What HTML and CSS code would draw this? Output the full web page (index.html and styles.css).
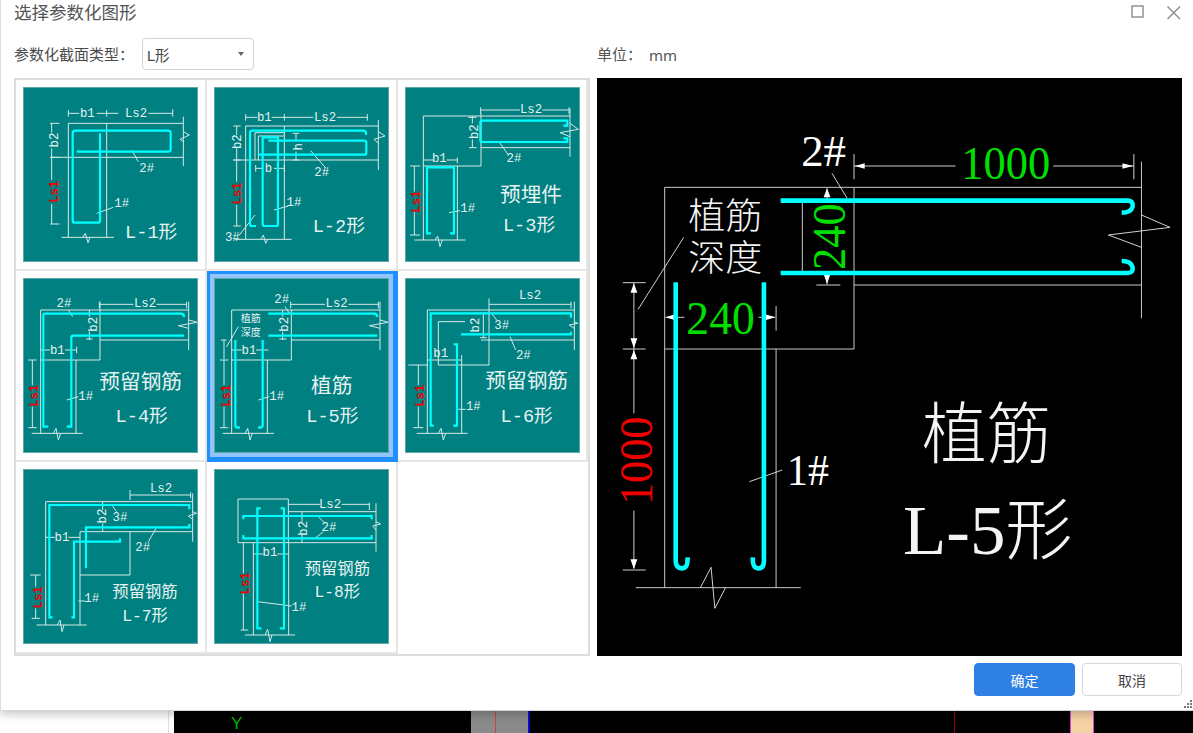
FILE: index.html
```html
<!DOCTYPE html>
<html lang="zh">
<head>
<meta charset="utf-8">
<title>选择参数化图形</title>
<link rel="stylesheet" href="styles.css">
</head>
<body>
<div class="dialog">
  <header class="titlebar">
    <h1 class="title">选择参数化图形</h1>
    <div class="winbtns">
      <svg class="winicon" width="14" height="14" viewBox="0 0 14 14"><rect class="wi" x="1" y="1" width="11" height="11"/></svg>
      <svg class="winicon" width="15" height="15" viewBox="0 0 15 15"><path class="wi" d="M1.5 1.5L14 14M14 1.5L1.5 14"/></svg>
    </div>
  </header>
  <div class="toolbar">
    <div class="tool-left">
      <span class="label">参数化截面类型：</span>
      <div class="select"><span>L形</span><i class="caret"></i></div>
    </div>
    <div class="tool-right"><span>单位：</span><span class="unit">mm</span></div>
  </div>
  <main class="content">
    <div class="gallery">
      <div class="cell"><svg class="thumb" viewBox="69 261 525 525">
        <path class="ln" d="M205 330V350M205 340H238M290 340H355M320 330V350M445 340H518M518 328V350M205 370V712M320 370V712M205 370H550M150 472H550M550 350V498M185 712H342M248 712L256 700L264 728L270 712M550 395L568 405L540 418L550 425M150 370H178M155 370V398M155 445V472M150 472H178M155 472V540M155 612V672M150 672H178M395 450L415 485M290 640L340 622"/>
        <path class="cy" d="M225 392H505Q512 392 512 399V448Q512 455 505 455H230M300 400V662Q300 668 294 668H224Q218 668 218 662V400Q218 392 226 392"/>
        <text class="t c" x="262" y="351">b1</text><text class="t c" x="408" y="351">Ls2</text>
        <text class="t c" x="440" y="517">2#</text><text class="t c" x="365" y="622">1#</text>
        <text class="t c" transform="rotate(-90 175 420)" x="175" y="420">b2</text>
        <text class="t c red" transform="rotate(-90 175 575)" x="175" y="575">Ls1</text>
        <text class="t big" x="375" y="715">L-1形</text>
      </svg></div>
      <div class="cell"><svg class="thumb" viewBox="642 261 525 525">
        <path class="ln" d="M737 342V362M737 352H772M815 352H940M1010 352H1102M853 342V362M1102 342V362M737 378V718M853 378V718M737 378H1135M700 480H1135M1135 360V510M705 718H875M765 398H853M765 398V480M775 408H853M775 408V480M888 400V425M888 455V480M878 400H898M878 480H898M767 495V515M767 505H790M822 505H853M853 495V515M710 378V405M710 445V480M700 378H722M700 480H722M710 480V545M710 615V678M700 678H722M932 452L978 505M822 630L865 618M718 705L765 645M1135 395L1155 408L1122 418L1135 430M782 718L790 705L797 730L803 718"/>
        <path class="cy" d="M1098 405V400Q1098 392 1090 392H756Q750 392 750 398V672Q750 678 756 678H768M805 422H1093Q1099 422 1099 428V458Q1099 464 1093 464H775M794 412H788V672Q788 678 794 678H828Q834 678 834 672V412H790"/>
        <text class="t c" x="793" y="363">b1</text><text class="t c" x="975" y="363">Ls2</text>
        <text class="t c" x="965" y="528">2#</text><text class="t c" x="882" y="617">1#</text><text class="t c" x="697" y="723">3#</text><text class="t c" x="805" y="516">b</text>
        <text class="t c" transform="rotate(-90 905 440)" x="905" y="440">h</text>
        <text class="t c" transform="rotate(-90 723 425)" x="723" y="425">b2</text>
        <text class="t c red" transform="rotate(-90 723 580)" x="723" y="580">Ls1</text>
        <text class="t big" x="938" y="695">L-2形</text>
      </svg></div>
      <div class="cell"><svg class="thumb" viewBox="30 21 525 525">
        <path class="ln" d="M257 82V102M257 90H375M442 90H522M522 82V102M85 108V480M85 108H525M525 85V230M258 100V258H85M258 203H525M187 258V480M58 480H212M232 108V130M232 178V203M222 203H245M220 112H245M85 240H115M155 240H187M187 232V250M45 258H75M58 258V335M58 395V465M45 465H75M525 130L550 148L495 158L525 170M120 480L128 468L135 500L142 480M312 185L340 225M162 398L195 392"/>
        <path class="cy" d="M505 137H517V122H262Q256 122 256 128V180Q256 186 262 186H517V175H505M108 460H96V262H177V460H165"/>
        <text class="t c" x="133" y="245">b1</text><text class="t c" x="408" y="99">Ls2</text>
        <text class="t c" x="357" y="247">2#</text><text class="t c" x="218" y="397">1#</text>
        <text class="t c" transform="rotate(-90 250 155)" x="250" y="155">b2</text>
        <text class="t c red" transform="rotate(-90 74 365)" x="74" y="365">Ls1</text>
        <text class="t cjk c" x="408" y="367">预埋件</text>
        <text class="t big c" x="402" y="452">L-3形</text>
      </svg></div>
      <div class="cell"><svg class="thumb" viewBox="69 39 525 525">
        <path class="ln" d="M298 110V130M298 118H400M470 118H560M560 110V130M122 135V505M122 135H566M566 110V255M300 110V285H122M300 225H566M228 285V505M95 505H248M268 135V155M268 200V225M258 222H278M122 255H150M195 255H230M230 245V265M85 285H110M97 285V360M97 425V488M85 488H110M566 165L592 172L535 182L566 190M160 505L168 490L175 525L182 505M205 135L218 155M200 405L235 395"/>
        <path class="cy" d="M552 156Q552 146 542 146H135Q130 146 130 152V485H145M552 212H220Q214 212 214 218V485H200"/>
        <text class="t c" x="172" y="267">b1</text><text class="t c" x="435" y="127">Ls2</text>
        <text class="t c" x="192" y="125">2#</text><text class="t c" x="257" y="406">1#</text>
        <text class="t c" transform="rotate(-90 292 178)" x="292" y="178">b2</text>
        <text class="t c red" transform="rotate(-90 114 392)" x="114" y="392">Ls1</text>
        <text class="t cjk c" x="422" y="372">预留钢筋</text>
        <text class="t big c" x="425" y="472">L-4形</text>
      </svg></div>
      <div class="cell active"><svg class="thumb" viewBox="642 39 525 525">
        <path class="ln" d="M872 110V130M872 118H975M1045 118H1135M1135 110V130M695 135V505M695 135H1140M1140 110V255M874 135V285H695M874 225H1140M802 285V505M668 505H822M855 125L868 145M715 185L680 245M848 135V155M848 200V225M838 222H860M695 255H725M768 255H805M663 225H680M672 225V282M660 285H685M672 285V360M672 425V488M660 488H685M1140 165L1165 172L1108 182L1140 190M735 505L743 490L750 525L757 505M775 405L808 395"/>
        <path class="cy" d="M805 146H1122Q1132 146 1132 156M805 212H1132M706 225V480Q706 488 714 488H720M788 225V480Q788 488 780 488H774"/>
        <text class="t c" x="747" y="267">b1</text><text class="t c" x="1010" y="127">Ls2</text>
        <text class="t c" x="845" y="115">2#</text><text class="t c" x="830" y="406">1#</text>
        <text class="t c small" x="752" y="172">植筋</text><text class="t c small" x="752" y="213">深度</text>
        <text class="t c" transform="rotate(-90 864 178)" x="864" y="178">b2</text>
        <text class="t c red" transform="rotate(-90 690 392)" x="690" y="392">Ls1</text>
        <text class="t cjk c" x="995" y="385">植筋</text>
        <text class="t big c" x="997" y="472">L-5形</text>
      </svg></div>
      <div class="cell"><svg class="thumb" viewBox="30 39 525 525">
        <path class="ln" d="M282 100V135M282 118H528M528 110V130M97 135V505M97 135H538M538 110V255M282 135V300H130M130 170V300M130 170H210M258 225H538M200 270V505M65 505H218M97 285H200M265 145V218M255 145H275M255 218H275M40 300H100M70 300V360M70 425V488M55 488H85M538 170L548 175L522 180L538 190M130 505L138 490L145 525L152 505M290 145L305 165M345 215L362 255M190 433H212"/>
        <path class="cy" d="M528 158V145H107V482H116M198 208H528V200M176 238H186V482H175"/>
        <text class="t c" x="137" y="275">b1</text><text class="t c" x="405" y="102">Ls2</text>
        <text class="t c" x="320" y="192">3#</text><text class="t c" x="385" y="281">2#</text><text class="t c" x="235" y="435">1#</text>
        <text class="t c" transform="rotate(-90 252 180)" x="252" y="180">b2</text>
        <text class="t c red" transform="rotate(-90 87 392)" x="87" y="392">Ls1</text>
        <text class="t cjk c" x="395" y="368">预留钢筋</text>
        <text class="t big c" x="395" y="470">L-6形</text>
      </svg></div>
      <div class="cell"><svg class="thumb" viewBox="69 27 525 525">
        <path class="ln" d="M390 90V120M390 105H572M572 97V115M137 125V495M137 125H578M578 100V245M240 215V495M240 215H578M240 345H390M390 215V345M110 495H260M308 125V150M308 190V215M137 232H165M205 232H240M90 345H122M107 345V380M107 445V475M95 475H120M578 155L590 160L565 168L578 178M172 495L180 480L186 515L192 495M335 135L350 155M445 245L468 205M235 423H255"/>
        <path class="cy" d="M568 148V135H148V472H158M568 192V202H258V325M360 235V245H222V472H214"/>
        <text class="t c" x="186" y="243">b1</text><text class="t c" x="483" y="95">Ls2</text>
        <text class="t c" x="360" y="183">3#</text><text class="t c" x="428" y="272">2#</text><text class="t c" x="275" y="425">1#</text>
        <text class="t c" transform="rotate(-90 318 168)" x="318" y="168">b2</text>
        <text class="t c red" transform="rotate(-90 126 412)" x="126" y="412">Ls1</text>
        <text class="t mid c" x="435" y="412">预留钢筋</text>
        <text class="t mid c" x="435" y="482">L-7形</text>
      </svg></div>
      <div class="cell"><svg class="thumb" viewBox="642 27 525 525">
        <path class="ln" d="M714 117H865V248H714ZM866 133H960M1025 133H1108M1108 128V150M866 155H1128M866 248H1128M1128 130V275M760 248V525M866 248V525M735 525H885M722 510H745M730 248V340M730 400V510M906 155V185M906 225V248M762 282H790M832 282H866M1128 185L1142 192L1118 198L1128 210M795 525L803 508L810 545L816 525M955 170L975 190M945 235L970 215M772 425L875 438"/>
        <path class="cy" d="M782 145H772V505H784M842 145H852V505H840M730 178V168H1115V178M730 225V235H1115V225"/>
        <text class="t c" x="810" y="287">b1</text><text class="t c" x="990" y="145">Ls2</text>
        <text class="t c" x="987" y="212">2#</text><text class="t c" x="897" y="454">1#</text>
        <text class="t c" transform="rotate(-90 920 205)" x="920" y="205">b2</text>
        <text class="t c red" transform="rotate(-90 747 370)" x="747" y="370">Ls1</text>
        <text class="t mid c" x="1012" y="342">预留钢筋</text>
        <text class="t mid c" x="1012" y="412">L-8形</text>
      </svg></div>
    </div>
    <div class="preview">
      <svg class="drawing" viewBox="0 -126 1538.6 1734" preserveAspectRatio="none">
        <path class="pl" d="M178 202H1432M178 202V1403M676 202V687M178 687H676M676 495H1432M1432 125V595M471 687V1403M102 1403H536"/>
        <path class="pw" d="M676 102V178M1412 102V178M676 138H943M1200 138H1412M1432 285L1507 322L1345 345L1432 382M618 160L658 235M540 242V459H676M605 205V238M605 460V493M577 495H640M228 352L108 568M68 488H128M68 687H128M97 488V880M97 1172V1345M68 1350H128M180 592H230M425 592H468M471 558V632M272 1403L300 1342L310 1465L338 1403M401 1085L487 1050"/>
        <path class="arrow" d="M678 138L704 130V146ZM1410 138L1382 130V146ZM605 205L596 232H614ZM605 492L596 462H614ZM97 490L88 518H106ZM97 685L88 655H106ZM97 690L88 718H106ZM97 1348L88 1318H106ZM180 592L206 583V601ZM470 592L442 583V601Z"/>
        <path class="rebar" d="M483 242H1395Q1412 242 1408 262Q1404 278 1380 278M483 459H1395Q1412 459 1408 440Q1404 423 1380 423M207 487V1322Q207 1345 224 1345Q240 1345 238 1312M439 487V1322Q439 1345 424 1345Q408 1345 410 1312"/>
        <text class="dim" x="958" y="178" textLength="234" lengthAdjust="spacingAndGlyphs">1000</text>
        <text class="dim" x="235" y="642" textLength="180" lengthAdjust="spacingAndGlyphs">240</text>
        <text class="dim side" transform="rotate(-90 652 450)" x="652" y="450" textLength="200" lengthAdjust="spacingAndGlyphs">240</text>
        <text class="dim side red" transform="rotate(-90 145 1155)" x="145" y="1155" textLength="265" lengthAdjust="spacingAndGlyphs">1000</text>
        <text class="note" x="537" y="138" textLength="118" lengthAdjust="spacingAndGlyphs">2#</text>
        <text class="note" x="500" y="1095" textLength="110" lengthAdjust="spacingAndGlyphs">1#</text>
        <text class="cn" x="240" y="327" textLength="195" lengthAdjust="spacingAndGlyphs">植筋</text>
        <text class="cn" x="240" y="452" textLength="195" lengthAdjust="spacingAndGlyphs">深度</text>
        <text class="cn large" x="855" y="1015" textLength="340" lengthAdjust="spacingAndGlyphs">植筋</text>
        <text class="cn large" x="805" y="1303" textLength="445" lengthAdjust="spacingAndGlyphs"><tspan class="latin">L-5</tspan>形</text>
      </svg>
    </div>
  </main>
  <footer class="footer">
    <button class="btn primary" type="button">确定</button>
    <button class="btn" type="button">取消</button>
  </footer>
  <svg class="grip" width="10" height="10" viewBox="0 0 10 10"><path d="M7 1h2v2H7zM4 4h2v2H4zM7 4h2v2H7zM1 7h2v2H1zM4 7h2v2H4zM7 7h2v2H7z"/></svg>
</div>
<div class="backdrop">
  <div class="seg blank"></div>
  <div class="seg gutter"></div>
  <div class="seg canvas-a"><span class="axis">Y</span></div>
  <div class="seg graybar"><i class="redline"></i></div>
  <div class="seg blueline"></div>
  <div class="seg canvas-b"></div>
  <div class="seg darkred"></div>
  <div class="seg canvas-c"></div>
  <div class="seg peach"></div>
  <div class="seg canvas-d"></div>
</div>
</body>
</html>
```
FILE: styles.css
```css
* { box-sizing: border-box; }
html, body { margin: 0; padding: 0; height: 733px; overflow: hidden; background: #fff; }
body { font-family: "Liberation Sans", "Noto Sans CJK SC", sans-serif; color: #444; display: flex; flex-direction: column; }

.dialog { position: relative; z-index: 2; height: 711px; flex: none; background: #fff; border-left: 1px solid #dedede; border-bottom: 1px solid #d6d6d6; box-shadow: 0 2px 10px rgba(0,0,0,.28); padding: 0 11px 0 13px; display: flex; flex-direction: column; }

.titlebar { height: 27px; flex: none; display: flex; align-items: center; justify-content: space-between; }
.title { margin: 0; font-size: 17.5px; font-weight: 400; color: #555; line-height: 27px; }
.winbtns { display: flex; gap: 21px; align-items: center; margin-right: 1px; margin-bottom: 3px; }
.winicon { display: block; }
.wi { fill: none; stroke: #8a8a8a; stroke-width: 1.4; }

.toolbar { height: 51px; flex: none; display: flex; padding-top: 11px; }
.tool-left { width: 583px; display: flex; align-items: flex-start; }
.label { width: 128px; font-size: 15px; line-height: 34px; color: #4a4a4a; white-space: nowrap; }
.select { width: 112px; height: 32px; border: 1px solid #d4d4d4; border-radius: 4px; display: flex; align-items: center; justify-content: space-between; padding: 0 9px 0 4px; font-size: 14.5px; color: #444; }
.caret { width: 0; height: 0; border-left: 3.5px solid transparent; border-right: 3.5px solid transparent; border-top: 4px solid #666; }
.tool-right { display: flex; gap: 7px; font-size: 15px; line-height: 34px; color: #555; }
.unit { font-family: "Noto Sans", sans-serif; color: #555; }

.content { display: flex; gap: 7px; flex: none; height: 578px; }
.gallery { width: 576px; height: 578px; border: 2px solid #dcdcdc; display: grid; grid-template-columns: 191px 191px 190px; grid-template-rows: 191px 191px 192px; }
.cell { border-right: 2px solid #e6e6e6; border-bottom: 2px solid #e6e6e6; padding: 7px 0 0 7px; }
.cell.active { border-color: #1e90ff; box-shadow: inset 0 0 0 3px #1e90ff, inset 0 0 0 7px #93c3fb; }
.thumb { display: block; width: 175px; height: 175px; background: #008080; outline: 1px solid #5fa8a8; outline-offset: -1px; }

.ln { fill: none; stroke: #d5e8e8; stroke-width: 3; }
.cy { fill: none; stroke: #00ffff; stroke-width: 6.5; }
.t { fill: #e6f2f2; font-family: "Liberation Mono", "Noto Sans CJK SC", monospace; font-size: 37px; }
.t.c { text-anchor: middle; }
.t.red { fill: #f00000; font-weight: 700; }
.t.big { font-size: 56px; }
.t.cjk { font-size: 62px; }
.t.mid { font-size: 49px; }
.t.small { font-size: 30px; }

.preview { width: 585px; height: 578px; background: #000; flex: none; }
.drawing { display: block; width: 585px; height: 578px; }
.pl, .pw, .rebar { vector-effect: non-scaling-stroke; fill: none; }
.pl { stroke: #c8c8c8; stroke-width: 1; }
.pw { stroke: #e6e6e6; stroke-width: .9; }
.arrow { fill: #fff; }
.rebar { stroke: #00ffff; stroke-width: 4.6; }
.dim { fill: #00e000; font-family: "Liberation Serif", serif; font-size: 140px; }
.dim.side { font-size: 124px; }
.dim.red { fill: #f00000; }
.note { fill: #fff; font-family: "Liberation Serif", serif; font-size: 133px; }
.cn { fill: #f4f4f4; font-family: "Noto Sans CJK SC", sans-serif; font-size: 108px; font-weight: 300; }
.cn.large { font-size: 200px; }
.latin { font-family: "Liberation Serif", serif; font-size: 212px; }

.footer { flex: 1; display: flex; justify-content: flex-end; gap: 7px; padding-top: 7px; align-items: flex-start; }
.btn { width: 100px; height: 33px; border: 1px solid #d8d8d8; border-radius: 4px; background: #fff; color: #444; font-family: "Noto Sans CJK SC", sans-serif; font-size: 14px; padding: 0; }
.btn.primary { width: 101px; background: #2f80e4; border-color: #2f80e4; color: #fff; }

.grip { position: absolute; right: 0; bottom: 1px; fill: #777; }

.backdrop { flex: 1; display: flex; min-height: 0; }
.seg { flex: none; height: 100%; }
.blank { width: 168px; background: #fff; }
.gutter { width: 6px; background: #fff; border-left: 1px solid #e0e0e0; }
.canvas-a { width: 297px; background: #000; padding-left: 57px; }
.axis { display: block; color: #00b400; font-size: 17px; line-height: 26px; }
.graybar { width: 57px; background: #8a8a8a; padding-left: 24px; }
.redline { display: block; width: 1px; height: 100%; background: #d04040; }
.blueline { width: 2px; background: #0a0ac8; }
.canvas-b { width: 424px; background: #000; }
.darkred { width: 1px; background: #a00000; }
.canvas-c { width: 115px; background: #000; }
.peach { width: 24px; background: #f5d2a5; border-left: 1px solid #e040e0; border-right: 1px solid #e040e0; }
.canvas-d { flex: 1; background: #000; }
```
